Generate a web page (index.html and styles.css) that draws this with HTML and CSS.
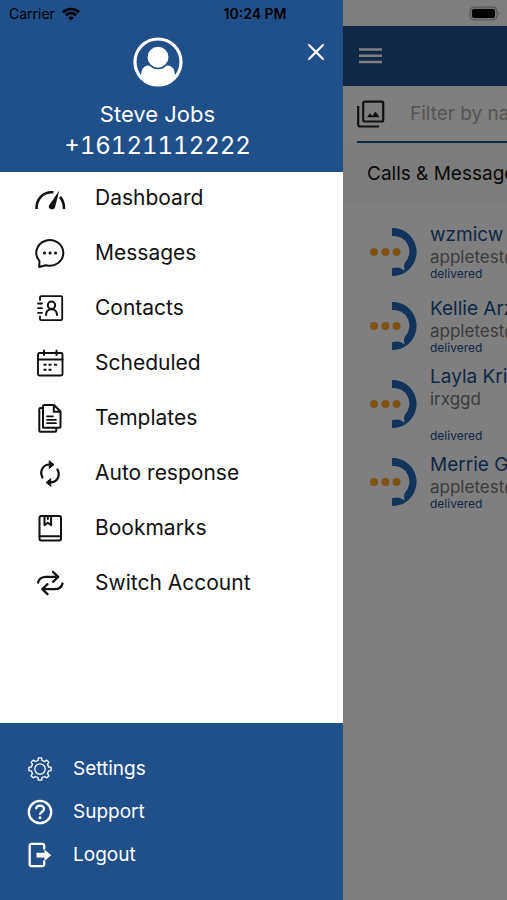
FILE: index.html
```html
<!DOCTYPE html>
<html lang="en">
<head>
    <meta charset="UTF-8">
    <meta name="viewport" content="width=device-width, initial-scale=1.0">
    <title>Calls &amp; Messages</title>
    <link rel="stylesheet" href="styles.css">
</head>
<body>
    <!-- Status bar -->
    <div class="status-bar">
        <div class="carrier">
            <span>Carrier</span>
            <svg width="18" height="14" viewBox="0 0 18 14" fill="none" stroke="#000" stroke-width="2.6">
                <path d="M1 5.2a11.5 11.5 0 0 1 16 0M3.9 8.2a7.3 7.3 0 0 1 10.2 0"/>
                <path d="M9 13.6L6.2 10.8a4 4 0 0 1 5.6 0z" fill="#000" stroke="none"/>
            </svg>
        </div>
        <div class="time">10:24 PM</div>
        <div class="battery">
            <svg width="32" height="16" viewBox="0 0 32 16">
                <rect x="1" y="1" width="27" height="13" rx="4" fill="#737373" stroke="#555" stroke-width="1"/>
                <rect x="3" y="3" width="23" height="9" rx="2" fill="#000"/>
                <path d="M29.5 5.5q2 2 0 4z" fill="#555"/>
            </svg>
        </div>
    </div>

    <div class="app">
        <!-- Side menu -->
        <aside class="drawer">
            <header class="profile">
                <button class="close" type="button" aria-label="Close menu">
                    <svg width="18" height="18" viewBox="0 0 18 18" stroke="#fff" stroke-width="2.2" stroke-linecap="round"><path d="M2 2l14 14M16 2L2 16"/></svg>
                </button>
                <svg width="50" height="50" viewBox="0 0 50 50">
                    <circle cx="25" cy="25" r="23" fill="none" stroke="#fff" stroke-width="3.2"/>
                    <path d="M8 38.500C8.500 32 10.500 29 15.500 28.500H34.500C39.500 29 41.500 32 42 38.500A22.500 22.500 0 0 1 25 48 22.500 22.500 0 0 1 8 38.500z" fill="#fff"/>
                    <circle cx="25" cy="20.200" r="11.200" fill="#fff" stroke="#20508a" stroke-width="1.500"/>
                </svg>
                <div class="user-name">Steve Jobs</div>
                <div class="user-phone">+16121112222</div>
            </header>

            <nav class="menu">
                <a href="#">
                    <svg viewBox="0 0 32 32" class="icon">
                        <path d="M2.500 27c-.3-9.500 6-17.500 17-16.700M26 15c3 3.200 4 7.500 4 12" stroke-width="2.600" stroke-linecap="butt"/>
                        <path d="M25.300 8.500L21 25.200c-1.100 3.800-7.500 2.200-6-1.700z" fill="#111" stroke="none"/>
                    </svg>
                    Dashboard
                </a>
                <a href="#">
                    <svg viewBox="0 0 32 32" class="icon">
                        <path d="M5.500 24.200A13.500 12.800 0 1 1 12 28.200L5.200 30z"/>
                        <path d="M10.500 16h.1M16 16h.1M21.500 16h.1" stroke-width="3"/>
                    </svg>
                    Messages
                </a>
                <a href="#">
                    <svg viewBox="0 0 32 32" class="icon">
                        <path d="M6 8V5.500Q6 4.200 7.300 4.200H27Q28.200 4.200 28.200 5.500V27Q28.200 28.200 27 28.200H7.300Q6 28.200 6 27V24.500M4 11.500h4M4 16.200h4M4 20.800h4" stroke-width="1.800"/>
                        <circle cx="17.500" cy="13.200" r="3.700"/>
                        <path d="M12 23c0-3.500 2.500-5.800 5.500-5.800s5.500 2.300 5.500 5.800"/>
                    </svg>
                    Contacts
                </a>
                <a href="#">
                    <svg viewBox="0 0 32 32" class="icon">
                        <rect x="4" y="6" width="24.500" height="22.500" rx="1.500" stroke-width="1.900"/>
                        <path d="M4 12.500h24.500M10 3.500v4.500M22.500 3.500v4.500" stroke-width="1.900"/>
                        <path d="M9.500 17.800h3M14.500 17.800h3M20 17.800h3M9.500 22.800h3M14.500 22.800h3" stroke-width="1.900" stroke-linecap="butt"/>
                    </svg>
                    Scheduled
                </a>
                <a href="#">
                    <svg viewBox="0 0 32 32" class="icon">
                        <path d="M9 25.800V4.200Q9 3 10.200 3H20l6.500 6.500V24.600Q26.500 25.800 25.300 25.800H9zM19.800 3.300V9.700h6.500M8.500 6H6.500Q5.300 6 5.300 7.200V28.500Q5.300 29.800 6.500 29.800H21Q22.300 29.800 22.300 28.500V26.500" stroke-width="2"/>
                        <path d="M13 14.300h6M13 17.800h9M13 21.200h9" stroke-width="1.700"/>
                    </svg>
                    Templates
                </a>
                <a href="#">
                    <svg viewBox="0 0 32 32" class="icon">
                        <path d="M8.500 20.500C5 13.500 9.500 7.300 16 7.500M23.500 12.500c3.500 7-1 13.200-7.500 13" stroke-width="2.200"/>
                        <path d="M15.500 4l4.500 3.600-4.500 3.600zM16.500 21.900l-4.500 3.600 4.500 3.600z" fill="#111" stroke-width="1"/>
                    </svg>
                    Auto response
                </a>
                <a href="#">
                    <svg viewBox="0 0 32 32" class="icon">
                        <rect x="5.500" y="4" width="21.500" height="24.500" rx="1.700"/>
                        <path d="M5.500 24.300H27M10.500 4v9.200l3.300-2.500 3.300 2.500V4M13.800 4v3"/>
                    </svg>
                    Bookmarks
                </a>
                <a href="#">
                    <svg viewBox="0 0 32 32" class="icon">
                        <path d="M4 15.500C5 11 8.500 9.800 12 9.800H24M19 4.800l5.200 5-5.200 5M28.500 16.500c-1 4.500-4.500 5.700-8 5.700H8.500M13.500 17.200l-5.200 5 5.200 5" stroke-width="2.300"/>
                    </svg>
                    Switch Account
                </a>
            </nav>

            <footer class="drawer-footer">
                <a href="#">
                    <svg viewBox="0 0 26 26" class="icon-small">
                        <path d="M11 4.400L11.400 1.900H14.600L15 4.400L17.700 5.500L19.700 4.100L21.900 6.300L20.500 8.300L21.600 11L24.100 11.400V14.600L21.600 15L20.500 17.700L21.900 19.700L19.700 21.900L17.700 20.500L15 21.600L14.600 24.100H11.400L11 21.600L8.300 20.500L6.300 21.900L4.100 19.700L5.500 17.700L4.400 15L1.900 14.600V11.400L4.400 11L5.500 8.300L4.100 6.300L6.300 4.100L8.300 5.500z" stroke-width="1.300"/>
                        <circle cx="13" cy="13" r="5.200" stroke-width="1.300"/>
                    </svg>
                    Settings
                </a>
                <a href="#">
                    <svg viewBox="0 0 26 26" class="icon-small">
                        <circle cx="13" cy="13" r="11.200" stroke-width="2.300"/>
                        <path d="M9.200 10.300c0-5 7.700-4.700 7.700-.3 0 2.800-3.900 3-3.900 5.700" stroke-width="2.300" stroke-linecap="butt"/>
                        <path d="M13 17.500v2.400" stroke-width="2.400" stroke-linecap="butt"/>
                    </svg>
                    Support
                </a>
                <a href="#">
                    <svg viewBox="0 0 26 26" class="icon-small">
                        <path d="M17.200 7.500V3.800Q17.200 1.900 15.300 1.900H4.500Q2.700 1.900 2.700 3.800V22.200Q2.700 24.100 4.500 24.100H15.300Q17.200 24.100 17.200 22.200V18.500" stroke-width="2.300" stroke-linecap="butt"/>
                        <path d="M9.500 10.800h8V7.500l6.700 5.700-6.700 5.700v-3.300h-8z" fill="#fff" stroke="none"/>
                    </svg>
                    Logout
                </a>
            </footer>
        </aside>

        <!-- Main screen -->
        <main class="screen">
            <div class="toolbar">
                <button type="button" aria-label="Open menu">
                    <svg width="24" height="18" viewBox="0 0 24 18" stroke="#fff" stroke-width="2.400"><path d="M1 2.500h23M1 8.700h23M1 15h23"/></svg>
                </button>
            </div>
            <div class="filter">
                <svg width="28" height="28" viewBox="0 0 28 28" fill="none" stroke="#222" stroke-width="2.200">
                    <rect x="6.200" y="1.700" width="20" height="19.800" rx="1.500"/>
                    <path d="M1.200 6v18.500Q1.200 26.500 3 26.500H22"/>
                    <path d="M10 17.300l3-4 2.200 2.600 3.200-4.300 4.300 5.700z" fill="#222" stroke="none"/>
                </svg>
                <input type="text" placeholder="Filter by name" aria-label="Filter by name">
            </div>
            <h1>Calls &amp; Messages</h1>
            <ul class="threads">
                <li>
                    <svg class="logo" viewBox="0 0 48 48"><use href="#logo"/></svg>
                    <div>
                        <div class="name">wzmicw</div>
                        <div class="message">appletest@</div>
                        <div class="state">delivered</div>
                    </div>
                </li>
                <li>
                    <svg class="logo" viewBox="0 0 48 48"><use href="#logo"/></svg>
                    <div>
                        <div class="name">Kellie Arz</div>
                        <div class="message">appletest@</div>
                        <div class="state">delivered</div>
                    </div>
                </li>
                <li>
                    <svg class="logo" viewBox="0 0 48 48"><use href="#logo"/></svg>
                    <div>
                        <div class="name">Layla Kril</div>
                        <div class="message">irxggd<br><br></div>
                        <div class="state">delivered</div>
                    </div>
                </li>
                <li>
                    <svg class="logo" viewBox="0 0 48 48"><use href="#logo"/></svg>
                    <div>
                        <div class="name">Merrie G</div>
                        <div class="message">appletest@</div>
                        <div class="state">delivered</div>
                    </div>
                </li>
            </ul>
            <div class="scrim"></div>
        </main>
    </div>

    <!-- Shared thread logo -->
    <svg width="0" height="0" class="defs">
        <symbol id="logo" viewBox="0 0 48 48">
            <path d="M22 0a24 24 0 0 1 13.500 44.200Q30 48 22 48V40.300Q28 38.500 31.500 40.800L35 42.500Q33 39 35 34.500A15.700 15.700 0 0 0 22 8z" fill="#2468b8"/>
            <circle cx="4" cy="24" r="4" fill="#ffa526"/>
            <circle cx="15.500" cy="24" r="4" fill="#ffa526"/>
            <circle cx="26.500" cy="24" r="4" fill="#ffa526"/>
        </symbol>
    </svg>
</body>
</html>
```
FILE: styles.css
```css
* {
    box-sizing: border-box;
}
body {
    margin: 0;
    font-family: Inter, Roboto, sans-serif;
    color: #111;
}
a {
    color: inherit;
    text-decoration: none;
}
button {
    padding: 0;
    border: 0;
    background: none;
    cursor: pointer;
}
svg {
    display: block;
    flex: none;
}

/* Status bar */
.status-bar {
    position: absolute;
    top: 0;
    left: 0;
    right: 0;
    z-index: 2;
    display: grid;
    grid-template-columns: 1fr auto 1fr;
    align-items: center;
    height: 27px;
    padding: 0 6px 0 9px;
    font-size: 14px;
    color: #000;
}
.carrier {
    display: flex;
    align-items: center;
    gap: 7px;
}
.time {
    font-weight: 600;
}
.battery {
    justify-self: end;
}

.app {
    display: flex;
    min-height: 100vh;
}

/* Side menu */
.drawer {
    display: flex;
    flex-direction: column;
    flex: 0 0 343px;
    max-width: 80%;
    background: #fff;
}
.profile {
    position: relative;
    display: flex;
    flex-direction: column;
    align-items: center;
    height: 172px;
    padding: 37px 28px 0 0;
    background: #20508a;
    color: #fff;
}
.close {
    position: absolute;
    top: 43px;
    right: 18px;
}
.user-name {
    margin-top: 11px;
    font-size: 22px;
    line-height: 32px;
}
.user-phone {
    font-size: 24px;
    line-height: 32px;
    font-variant-numeric: tabular-nums;
}
.menu {
    flex: 1;
}
.menu a {
    display: flex;
    align-items: center;
    gap: 29px;
    height: 55px;
    padding: 0 0 4px 34px;
    font-size: 21px;
}
.icon {
    width: 32px;
    height: 32px;
    fill: none;
    stroke: #111;
    stroke-width: 2;
    stroke-linecap: round;
    stroke-linejoin: round;
}
.drawer-footer {
    padding: 24px 27px;
    background: #20508a;
    color: #fff;
}
.drawer-footer a {
    display: flex;
    align-items: center;
    gap: 20px;
    height: 43px;
    font-size: 19px;
}
.icon-small {
    width: 26px;
    height: 26px;
    fill: none;
    stroke: #fff;
    stroke-linecap: round;
    stroke-linejoin: round;
}

/* Main screen */
.screen {
    position: relative;
    flex: 1;
    min-width: 0;
    padding-top: 26px;
    overflow: hidden;
    white-space: nowrap;
    background: #fff;
}
.toolbar {
    display: flex;
    align-items: center;
    height: 60px;
    padding-left: 15px;
    background: #20508a;
}
.filter {
    display: flex;
    align-items: center;
    gap: 25px;
    height: 57px;
    margin-left: 14px;
    border-bottom: 2px solid #20508a;
}
.filter input {
    min-width: 0;
    padding: 0;
    border: 0;
    background: none;
    font: inherit;
    font-size: 19px;
}
.filter input::placeholder {
    color: #aaa;
}
h1 {
    margin: 0;
    padding-left: 24px;
    font-size: 19px;
    font-weight: 400;
    line-height: 61px;
    background: #f9f9f9;
}
.threads {
    margin: 0;
    padding: 11px 0;
    list-style: none;
}
.threads li {
    display: flex;
    align-items: center;
    gap: 12px;
    min-height: 74px;
    padding: 2px 0 2px 27px;
}
.logo {
    width: 48px;
    height: 48px;
}
.name {
    font-size: 19px;
    line-height: 24px;
    color: #20508a;
}
.message {
    font-size: 17px;
    line-height: 20px;
    color: #777;
}
.state {
    font-size: 12px;
    line-height: 14px;
    color: #20508a;
}
.scrim {
    position: absolute;
    inset: 0;
    background: rgba(0, 0, 0, 0.5);
}
.defs {
    position: absolute;
}
```
